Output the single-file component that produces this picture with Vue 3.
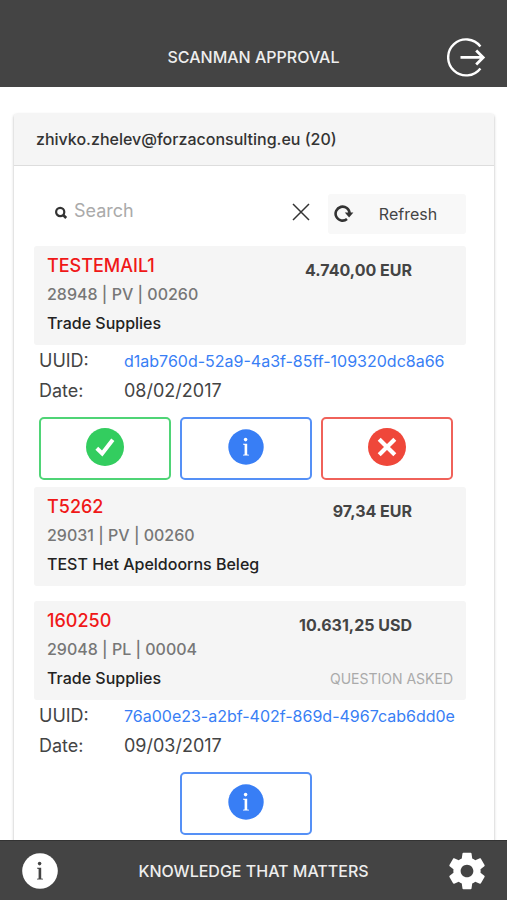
<script setup>
import { ref, computed } from 'vue'

const query = ref('')

const documents = [
  {
    title: 'TESTEMAIL1',
    reference: '28948 | PV | 00260',
    supplier: 'Trade Supplies',
    amount: '4.740,00 EUR',
    status: '',
    details: {
      uuid: 'd1ab760d-52a9-4a3f-85ff-109320dc8a66',
      date: '08/02/2017',
      decidable: true,
    },
  },
  {
    title: 'T5262',
    reference: '29031 | PV | 00260',
    supplier: 'TEST Het Apeldoorns Beleg',
    amount: '97,34 EUR',
    status: '',
    details: null,
  },
  {
    title: '160250',
    reference: '29048 | PL | 00004',
    supplier: 'Trade Supplies',
    amount: '10.631,25 USD',
    status: 'QUESTION ASKED',
    details: {
      uuid: '76a00e23-a2bf-402f-869d-4967cab6dd0e',
      date: '09/03/2017',
      decidable: false,
    },
  },
]

const visible = computed(() => {
  const q = query.value.trim().toLowerCase()
  return documents.filter((d) => (d.title + d.reference + d.supplier).toLowerCase().includes(q))
})
</script>

<template>
  <div class="app">
    <header class="topbar">
      <h1 class="bar-title">SCANMAN APPROVAL</h1>
      <button class="icon-button" type="button" aria-label="Log out">
        <svg width="40" height="40" viewBox="0 0 40 40" fill="none" stroke="#fff" stroke-width="2.4">
          <path d="M33.4 9.4A18 18 0 1 0 33.4 31.4" />
          <path d="M13.5 20.4H36M29.2 13.4L36.2 20.4L29.2 27.4" stroke-width="2.8" />
        </svg>
      </button>
    </header>

    <main class="content">
      <section class="card">
        <h2 class="card-header">zhivko.zhelev@forzaconsulting.eu (20)</h2>
        <div class="card-body">
          <div class="toolbar">
            <div class="search">
              <svg width="13" height="13" viewBox="0 0 13 13" fill="none" stroke="#333">
                <circle cx="5.2" cy="6" r="4.1" stroke-width="2.2" />
                <path d="M8.2 9L11.2 12" stroke-width="2.6" />
              </svg>
              <input v-model="query" class="search-input" type="text" placeholder="Search" aria-label="Search" />
              <button class="clear" type="button" aria-label="Clear search" @click="query = ''">
                <svg width="18" height="18" viewBox="0 0 18 18" fill="none" stroke="#333" stroke-width="1.5">
                  <path d="M1 1L17 17M17 1L1 17" />
                </svg>
              </button>
            </div>
            <button class="refresh" type="button">
              <svg width="20" height="18" viewBox="0 0 20 18" fill="none">
                <path d="M13 14.1A7 7 0 1 1 15.6 8.4" stroke="#333" stroke-width="2.6" />
                <path d="M10.8 7.6H19.4L15.1 12.4Z" fill="#333" />
              </svg>
              <span class="refresh-label">Refresh</span>
            </button>
          </div>

          <article v-for="doc in visible" :key="doc.title" class="document">
            <div class="summary">
              <div class="summary-main">
                <h3 class="doc-title">{{ doc.title }}</h3>
                <p class="doc-reference">{{ doc.reference }}</p>
                <p class="doc-supplier">{{ doc.supplier }}</p>
              </div>
              <div class="summary-side">
                <strong class="amount">{{ doc.amount }}</strong>
                <span v-if="doc.status" class="status">{{ doc.status }}</span>
              </div>
            </div>

            <div v-if="doc.details" class="details">
              <dl class="facts">
                <dt>UUID:</dt>
                <dd><a class="uuid" href="#">{{ doc.details.uuid }}</a></dd>
                <dt>Date:</dt>
                <dd>{{ doc.details.date }}</dd>
              </dl>
              <div class="actions">
                <button v-if="doc.details.decidable" class="action approve" type="button" aria-label="Approve">
                  <svg width="38" height="38" viewBox="0 0 38 38">
                    <circle cx="19" cy="19" r="19" fill="#33cd5f" />
                    <path d="M10.8 20.2L16.2 25.4L26.8 11.8" fill="none" stroke="#fff" stroke-width="4" />
                  </svg>
                </button>
                <button class="action info" type="button" aria-label="Information">
                  <svg width="36" height="36" viewBox="0 0 36 36">
                    <circle cx="18" cy="18" r="17.7" fill="#387ef5" />
                    <circle cx="17.6" cy="10.6" r="1.8" fill="#fff" />
                    <path d="M15 14.8H19.2V25.4L21 25.8V26.6H15V25.8L16.6 25.4V16L15 15.6Z" fill="#fff" />
                  </svg>
                </button>
                <button v-if="doc.details.decidable" class="action reject" type="button" aria-label="Reject">
                  <svg width="38" height="38" viewBox="0 0 38 38">
                    <circle cx="19" cy="19" r="19" fill="#ef473a" />
                    <path d="M11.2 11.2L26.8 26.8M26.8 11.2L11.2 26.8" stroke="#fff" stroke-width="4.2" />
                  </svg>
                </button>
              </div>
            </div>
          </article>
        </div>
      </section>
    </main>

    <footer class="bottombar">
      <button class="icon-button" type="button" aria-label="About">
        <svg width="36" height="36" viewBox="0 0 36 36">
          <circle cx="18" cy="18" r="17.8" fill="#fff" />
          <circle cx="17.6" cy="10.6" r="1.8" fill="#444" />
          <path d="M15 14.8H19.2V25.4L21 25.8V26.6H15V25.8L16.6 25.4V16L15 15.6Z" fill="#444" />
        </svg>
      </button>
      <p class="bar-title">KNOWLEDGE THAT MATTERS</p>
      <button class="icon-button" type="button" aria-label="Settings">
        <svg width="40" height="40" viewBox="1 1 22 22">
          <path
            fill="#fff"
            d="M19.43 12.98c.04-.32.07-.64.07-.98s-.03-.66-.07-.98l2.11-1.65c.19-.15.24-.42.12-.64l-2-3.46c-.12-.22-.39-.3-.61-.22l-2.49 1c-.52-.4-1.08-.73-1.69-.98l-.38-2.65C14.46 2.18 14.25 2 14 2h-4c-.25 0-.46.18-.49.42l-.38 2.65c-.61.25-1.17.59-1.69.98l-2.49-1c-.23-.09-.49 0-.61.22l-2 3.46c-.13.22-.07.49.12.64l2.11 1.65c-.04.32-.07.65-.07.98s.03.66.07.98l-2.11 1.65c-.19.15-.24.42-.12.64l2 3.46c.12.22.39.3.61.22l2.49-1c.52.4 1.08.73 1.69.98l.38 2.65c.03.24.24.42.49.42h4c.25 0 .46-.18.49-.42l.38-2.65c.61-.25 1.17-.59 1.69-.98l2.49 1c.23.09.49 0 .61-.22l2-3.46c.12-.22.07-.49-.12-.64l-2.11-1.65zM12 15.5c-1.93 0-3.5-1.57-3.5-3.5s1.57-3.5 3.5-3.5 3.5 1.57 3.5 3.5-1.57 3.5-3.5 3.5z"
          />
        </svg>
      </button>
    </footer>
  </div>
</template>

<style>
body {
  margin: 0;
  background: #fff;
}
</style>

<style scoped>
.app {
  display: flex;
  flex-direction: column;
  height: 100vh;
  font-family: Inter, 'Liberation Sans', sans-serif;
  color: #444;
}

h1, h2, h3, p, dl, dd {
  margin: 0;
}

button {
  padding: 0;
  border: 0;
  background: none;
  font: inherit;
  color: inherit;
  cursor: pointer;
}

svg {
  display: block;
}

.topbar,
.bottombar {
  display: grid;
  grid-template-columns: 40px 1fr 40px;
  align-items: center;
  flex: none;
  padding: 0 20px;
  background: #444;
  color: #eee;
}

.topbar {
  padding-top: 27px;
  height: 60px;
}

.bottombar {
  height: 60px;
  border-top: 1px solid #333;
  box-sizing: border-box;
}

.icon-button {
  display: flex;
  align-items: center;
  justify-content: center;
  height: 40px;
}

.bar-title {
  grid-column: 2;
  font-size: 16px;
  font-weight: 500;
  line-height: 24px;
  text-align: center;
}

.content {
  flex: 1;
  min-height: 0;
  overflow-y: auto;
  scrollbar-width: none;
  padding: 27px 13px 0 14px;
}

.card {
  border-radius: 3px;
  box-shadow: 0 1px 3px rgba(0, 0, 0, 0.3);
}

.card-header {
  padding: 14px 22px;
  border-bottom: 1px solid #ddd;
  border-radius: 3px 3px 0 0;
  background: #f5f5f5;
  font-size: 16px;
  font-weight: 500;
  line-height: 23px;
  color: #333;
}

.card-body {
  padding: 28px 28px 12px 20px;
}

.toolbar {
  display: flex;
  gap: 16px;
  height: 40px;
  margin-bottom: 12px;
}

.search {
  display: flex;
  flex: 1;
  min-width: 0;
  align-items: center;
  gap: 6px;
  padding: 0 2px 4px 21px;
}

.search-input {
  flex: 1;
  min-width: 0;
  padding: 0 0 3px;
  border: 0;
  outline: 0;
  background: none;
  font: inherit;
  font-size: 18px;
  color: #444;
}

.search-input::placeholder {
  color: #aaa;
}

.refresh {
  display: flex;
  flex: none;
  align-items: center;
  width: 138px;
  padding: 0 4px 0 6px;
  border-radius: 3px;
  background: #f8f8f8;
}

.refresh-label {
  flex: 1;
  font-size: 16px;
  text-align: center;
}

.document + .document {
  margin-top: 15px;
}

.document:has(.details) + .document {
  margin-top: 7px;
}

.summary {
  display: flex;
  justify-content: space-between;
  padding: 5px 13px 7px;
  border-radius: 3px;
  background: #f5f5f5;
}

.doc-title {
  font-size: 18px;
  font-weight: 500;
  line-height: 29px;
  color: #f01818;
}

.doc-reference,
.doc-supplier {
  font-size: 16px;
  font-weight: 500;
  line-height: 29px;
}

.doc-reference {
  color: #777;
}

.doc-supplier {
  color: #222;
}

.summary-side {
  display: flex;
  flex-direction: column;
  align-items: flex-end;
  justify-content: space-between;
  padding-top: 5px;
}

.amount {
  margin-right: 41px;
  font-size: 16px;
  font-weight: 700;
  line-height: 29px;
}

.status {
  font-size: 14px;
  line-height: 29px;
  color: #aaa;
}

.details {
  padding: 1px 13px 0 5px;
}

.facts {
  display: grid;
  grid-template-columns: 85px 1fr;
  font-size: 18px;
  line-height: 30px;
}

.uuid {
  display: block;
  font-size: 16px;
  color: #387ef5;
  text-decoration: none;
  white-space: nowrap;
}

.actions {
  display: grid;
  grid-template-columns: repeat(3, 1fr);
  gap: 9px;
  margin-top: 11px;
}

.action {
  display: flex;
  align-items: center;
  justify-content: center;
  height: 63px;
  padding-bottom: 3px;
  border: 2px solid;
  border-radius: 5px;
  box-sizing: border-box;
}

.approve {
  border-color: #4fd476;
}

.info {
  grid-column: 2;
  border-color: #5590f6;
}

.reject {
  border-color: #f0625a;
}
</style>
